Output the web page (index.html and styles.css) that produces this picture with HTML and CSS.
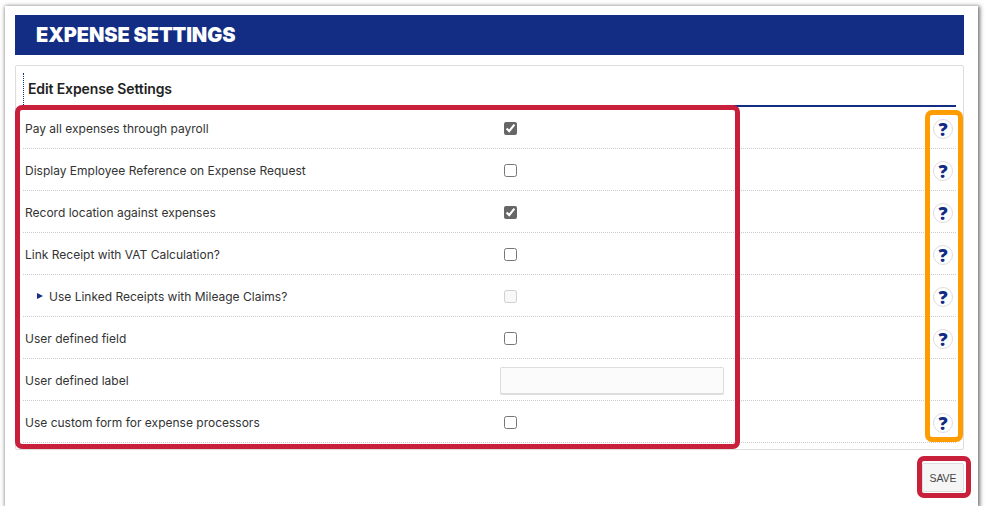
FILE: index.html
```html
<!DOCTYPE html>
<html lang="en">
  <head>
    <meta charset="UTF-8" />
    <title>Expense Settings</title>
    <link rel="stylesheet" href="styles.css">
  </head>
  <body>
    <div class="panel">
      <div class="banner">EXPENSE SETTINGS</div>
      <div class="card">
        <h4 class="card-title">Edit Expense Settings</h4>
        <div class="row">
          <div class="row-label">Pay all expenses through payroll</div>
          <div class="row-control"><input type="checkbox" checked /></div>
          <div class="help">?</div>
        </div>
        <div class="row">
          <div class="row-label">Display Employee Reference on Expense Request</div>
          <div class="row-control"><input type="checkbox" /></div>
          <div class="help">?</div>
        </div>
        <div class="row">
          <div class="row-label">Record location against expenses</div>
          <div class="row-control"><input type="checkbox" checked /></div>
          <div class="help">?</div>
        </div>
        <div class="row">
          <div class="row-label">Link Receipt with VAT Calculation?</div>
          <div class="row-control"><input type="checkbox" /></div>
          <div class="help">?</div>
        </div>
        <div class="row">
          <div class="row-label sub-label"><span class="arrow"></span>Use Linked Receipts with Mileage Claims?</div>
          <div class="row-control"><input type="checkbox" disabled /></div>
          <div class="help">?</div>
        </div>
        <div class="row">
          <div class="row-label">User defined field</div>
          <div class="row-control"><input type="checkbox" /></div>
          <div class="help">?</div>
        </div>
        <div class="row">
          <div class="row-label">User defined label</div>
          <div class="row-control"><input class="text-field" type="text" /></div>
        </div>
        <div class="row">
          <div class="row-label">Use custom form for expense processors</div>
          <div class="row-control"><input type="checkbox" /></div>
          <div class="help">?</div>
        </div>
      </div>
      <div class="actions">
        <button class="save">SAVE</button>
      </div>
      <div class="mark mark-fields"></div>
      <div class="mark mark-help"></div>
      <div class="mark mark-save"></div>
    </div>
  </body>
</html>
```

FILE: styles.css
```css
* {
  margin: 0;
  padding: 0;
  box-sizing: border-box;
}

body {
  font-family: Inter, "Liberation Sans", sans-serif;
  background-color: #ffffff;
  color: #333;
}

.panel {
  position: relative;
  width: 973px;
  height: 500px;
  margin: 6px 0 0 5px;
  padding: 9px 14px 0 10px;
  background-color: #ffffff;
  box-shadow: 1px 1px 4px 1px rgba(0, 0, 0, 0.55);
}

.banner {
  height: 40px;
  padding-left: 21px;
  background-color: #132d85;
  color: white;
  font-size: 20px;
  font-weight: 900;
  letter-spacing: -0.1px;
  line-height: 40px;
}

.card {
  height: 385px;
  margin-top: 10px;
  padding: 7px 7px 0 7px;
  border: 1px solid #dddddd;
  border-radius: 2px;
}

.card-title {
  height: 32px;
  padding-left: 4px;
  border-left: 1px dotted #132d85;
  color: #222;
  font-size: 14px;
  font-weight: 600;
  letter-spacing: -0.12px;
  line-height: 32px;
}

.row {
  display: flex;
  align-items: center;
  height: 42px;
  padding-left: 2px;
  padding-top: 1px;
  border-bottom: 1px dotted #cccccc;
  font-size: 12px;
}

.row:first-of-type {
  height: 44px;
  padding-top: 2px;
  border-top: 2px solid #132d85;
}

.row-label {
  width: 475px;
}

.sub-label {
  display: flex;
  align-items: center;
  padding-left: 12px;
}

.arrow {
  width: 0;
  height: 0;
  margin-right: 6px;
  border-top: 3.5px solid transparent;
  border-bottom: 3.5px solid transparent;
  border-left: 6px solid #132d85;
}

.row-control {
  display: flex;
  width: 408px;
}

.row-control input[type="checkbox"] {
  width: 13px;
  height: 13px;
  margin-left: 4px;
  accent-color: #666666;
}

.text-field {
  width: 224px;
  height: 28px;
  margin-top: 2px;
  background-color: #fbfbfb;
  border: 1px solid #dddddd;
  border-bottom-width: 2px;
  border-radius: 2px;
}

.help {
  width: 20px;
  height: 20px;
  margin-top: 2px;
  margin-left: 25px;
  border: 1px solid #dddddd;
  border-radius: 50%;
  color: #132d85;
  font-family: "Open Sans", sans-serif;
  font-size: 18px;
  font-weight: 800;
  line-height: 18px;
  text-align: center;
}

.row:first-of-type .help {
  margin-top: 0;
}

.actions {
  display: flex;
  justify-content: flex-end;
  padding-top: 13px;
}

.save {
  width: 42px;
  height: 29px;
  background-color: #f5f5f5;
  border: 1px solid #dddddd;
  border-radius: 2px;
  color: #444;
  font-family: "Liberation Sans", sans-serif;
  font-size: 10.5px;
}

/* annotation boxes drawn on top of the screenshot */
.mark {
  position: absolute;
  border: 5px solid #c8203a;
  border-radius: 7px;
}

.mark-fields {
  left: 10px;
  top: 99px;
  width: 725px;
  height: 344px;
}

.mark-help {
  left: 920px;
  top: 104px;
  width: 38px;
  height: 332px;
  border-color: #ff9c00;
}

.mark-save {
  left: 912px;
  top: 450px;
  width: 54px;
  height: 42px;
}
```
